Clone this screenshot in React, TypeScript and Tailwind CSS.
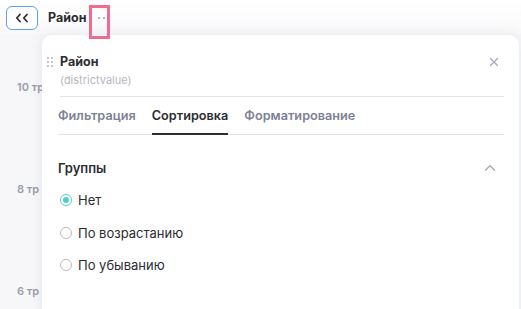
import { useState } from 'react';

const tabs = ['Фильтрация', 'Сортировка', 'Форматирование'];
const options = ['Нет', 'По возрастанию', 'По убыванию'];
const axis = ['10 тр', '8 тр', '6 тр'];

function DragHandle() {
  return (
    <div className="grid grid-cols-2 gap-x-[2px] gap-y-[2px]">
      {[0, 1, 2, 3, 4, 5].map((i) => (
        <span key={i} className="block h-[2px] w-[2px] bg-[#c3c6cf]" />
      ))}
    </div>
  );
}

export default function App() {
  const [tab, setTab] = useState('Сортировка');
  const [order, setOrder] = useState('Нет');

  return (
    <div
      className="relative h-[309px] w-[521px] overflow-hidden bg-[#f7f7f9] text-[#2b2d33]"
      style={{ fontFamily: 'Inter, "Noto Sans", sans-serif' }}
    >
      {/* top bar */}
      <div className="flex h-[34px] items-end bg-gradient-to-b from-white to-[#f9f9fb] pl-[6px]">
        <div className="flex h-[30px] items-center pb-[2px]">
          <button className="flex h-[24px] w-[32px] items-center justify-center rounded-[6px] border border-[#5f9ff0] bg-white">
            <svg width="14" height="10" viewBox="0 0 14 10" fill="none" stroke="#2b2d33" strokeWidth="1.8" strokeLinecap="round" strokeLinejoin="round">
              <polyline points="5,1.5 1.8,5 5,8.5" />
              <polyline points="12,1.5 8.8,5 12,8.5" />
            </svg>
          </button>
          <span className="ml-[10px] text-[12.5px] font-bold">Район</span>
          <span className="ml-[12px] flex gap-[3px]">
            <span className="block h-[2px] w-[2px] bg-[#b4b7c1]" />
            <span className="block h-[2px] w-[2px] bg-[#b4b7c1]" />
          </span>
        </div>
      </div>

      {/* highlight around menu trigger */}
      <div className="absolute left-[89px] top-[5px] z-20 h-[34px] w-[21px] border-[3px] border-[#f06b8d]" />

      <div className="flex">
        {/* chart axis behind the popover */}
        <div className="w-[42px] shrink-0 whitespace-nowrap pl-[17px] text-[11px] font-semibold text-[#9a9eaa]">
          <div className="mt-[46px] leading-[14px]">{axis[0]}</div>
          <div className="mt-[88px] leading-[14px]">{axis[1]}</div>
          <div className="mt-[88px] leading-[14px]">{axis[2]}</div>
        </div>

        {/* popover */}
        <div className="relative z-10 mt-[1px] mr-[2px] h-[300px] flex-1 rounded-t-[10px] bg-white shadow-[0_0_14px_rgba(30,35,60,0.08)]">
          <div className="relative pl-[18px] pr-[15px] pt-[18px]">
            <div className="absolute left-[5px] top-[22px]">
              <DragHandle />
            </div>
            <div className="text-[12.5px] font-bold leading-[18px]">Район</div>
            <div className="mt-[2px] text-[11px] leading-[14px] text-[#b4b7c1]">(districtvalue)</div>
            <button className="absolute right-[20px] top-[22px]">
              <svg width="10" height="10" viewBox="0 0 10 10" fill="none" stroke="#a8acb8" strokeWidth="1.4" strokeLinecap="round">
                <line x1="1.5" y1="1.5" x2="8.5" y2="8.5" />
                <line x1="8.5" y1="1.5" x2="1.5" y2="8.5" />
              </svg>
            </button>
            <div className="mt-[9px] border-t border-[#e3e4e9]" />
          </div>

          <div className="ml-[16px] mr-[15px] flex gap-[16px] border-b border-[#e3e4e9]">
            {tabs.map((t) => (
              <button
                key={t}
                onClick={() => setTab(t)}
                className={
                  'relative flex h-[37px] items-center text-[12.7px] font-semibold ' +
                  (t === tab ? 'text-[#2b2d33]' : 'text-[#7d8294]')
                }
              >
                {t}
                {t === tab && <span className="absolute bottom-[-1px] left-0 right-0 h-[2px] bg-[#2b2d33]" />}
              </button>
            ))}
          </div>

          <div className="pl-[16px] pr-[23px] pt-[24px]">
            <div className="flex h-[18px] items-center justify-between">
              <span className="text-[13px] font-semibold leading-[18px]">Группы</span>
              <svg width="12" height="8" viewBox="0 0 12 8" fill="none" stroke="#a8acb8" strokeWidth="1.5" strokeLinecap="round" strokeLinejoin="round" className="-mt-[1px]">
                <polyline points="1.5,6 6,1.8 10.5,6" />
              </svg>
            </div>
            <div className="mt-[7px] flex flex-col">
              {options.map((o) => (
                <label key={o} className="flex h-[32.5px] items-center pl-[2px]" onClick={() => setOrder(o)}>
                  <span
                    className={
                      'flex h-[12px] w-[12px] items-center justify-center rounded-full border ' +
                      (o === order ? 'border-[#58cccc]' : 'border-[#b7bbc7]')
                    }
                  >
                    {o === order && <span className="block h-[6px] w-[6px] rounded-full bg-[#58cccc]" />}
                  </span>
                  <span className="ml-[6px] text-[13px] leading-[18px] text-[#2b2d33]">{o}</span>
                </label>
              ))}
            </div>
          </div>
        </div>
      </div>
    </div>
  );
}
